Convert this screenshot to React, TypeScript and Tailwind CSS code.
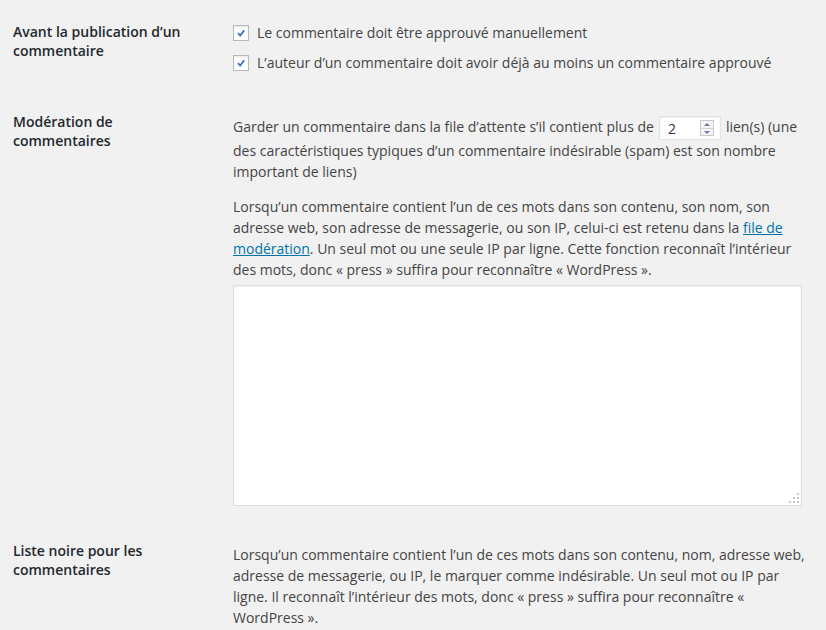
import React from "react";

const Check = ({ label }: { label: string }) => (
  <label className="flex items-center gap-[8px] leading-[21px]">
    <span className="relative inline-flex h-[16px] w-[16px] shrink-0 items-center justify-center border border-[#b4b9be] bg-white shadow-[inset_0_1px_2px_rgba(0,0,0,0.1)]">
      <svg width="10" height="10" viewBox="0 0 10 10">
        <path d="M2 5.2 L4.2 7.6 L8.2 2.2" fill="none" stroke="#3b6fc4" strokeWidth="1.8" />
      </svg>
    </span>
    <span>{label}</span>
  </label>
);

const NumberBox = ({ value }: { value: string }) => (
  <span className="mx-[5px] inline-flex h-[24px] w-[62px] items-center justify-between border border-[#e2e2e2] bg-white pl-[8px] pr-[6px] align-middle shadow-[inset_0_1px_2px_rgba(0,0,0,0.07)]">
    <span className="text-[#333]">{value}</span>
    <span className="flex h-[16px] w-[14px] flex-col border border-[#c9c9c9] bg-[#f4f4f4]">
      <span className="flex flex-1 items-center justify-center border-b border-[#d4d4d4]">
        <span className="h-0 w-0 border-x-[3px] border-b-[3px] border-x-transparent border-b-[#6b7f9a]" />
      </span>
      <span className="flex flex-1 items-center justify-center">
        <span className="h-0 w-0 border-x-[3px] border-t-[3px] border-x-transparent border-t-[#6b7f9a]" />
      </span>
    </span>
  </span>
);

const Row = ({
  label,
  children,
  className,
  bodyClass,
}: {
  label: string;
  children: React.ReactNode;
  className?: string;
  bodyClass?: string;
}) => (
  <div className={"flex " + (className ?? "")}>
    <div className="w-[220px] shrink-0 pr-[30px] text-[14px] font-semibold leading-[18.5px] text-[#23282d]">
      {label}
    </div>
    <div className={"w-[575px] " + (bodyClass ?? "")}>{children}</div>
  </div>
);

export default function App() {
  return (
    <div
      className="min-h-[630px] w-[826px] overflow-hidden bg-[#f1f1f1] pl-[13px] pt-[23px] text-[14px] text-[#444]"
      style={{ fontFamily: "'Open Sans', 'Noto Sans', sans-serif" }}
    >
      <Row label="Avant la publication d’un commentaire">
        <div className="-mt-[1px] flex flex-col gap-[9px]">
          <Check label="Le commentaire doit être approuvé manuellement" />
          <Check label="L’auteur d’un commentaire doit avoir déjà au moins un commentaire approuvé" />
        </div>
      </Row>

      <Row label="Modération de commentaires" className="mt-[40px]" bodyClass="pt-[3px]">
        <p className="leading-[21px]">
          Garder un commentaire dans la file d’attente s’il contient plus de
          <NumberBox value="2" />
          lien(s) (une des caractéristiques typiques d’un commentaire indésirable (spam) est son nombre
          important de liens)
        </p>
        <p className="mt-[14px] leading-[21px]">
          Lorsqu’un commentaire contient l’un de ces mots dans son contenu, son nom, son adresse web, son
          adresse de messagerie, ou son IP, celui-ci est retenu dans la{" "}
          <a href="#" className="text-[#0073aa] underline">
            file de modération
          </a>
          . Un seul mot ou une seule IP par ligne. Cette fonction reconnaît l’intérieur des mots, donc « press
          » suffira pour reconnaître « WordPress ».
        </p>
        <div className="relative mt-[5px] h-[221px] w-[569px]">
          <textarea className="block h-full w-full resize-none border border-[#ddd] bg-white shadow-[inset_0_1px_2px_rgba(0,0,0,0.07)] outline-none" />
          <svg className="pointer-events-none absolute bottom-[3px] right-[3px]" width="10" height="10" viewBox="0 0 10 10">
            <rect x="8" y="0" width="2" height="2" fill="#c6c6c6" />
            <rect x="4" y="4" width="2" height="2" fill="#c6c6c6" />
            <rect x="8" y="4" width="2" height="2" fill="#c6c6c6" />
            <rect x="0" y="8" width="2" height="2" fill="#c6c6c6" />
            <rect x="4" y="8" width="2" height="2" fill="#c6c6c6" />
            <rect x="8" y="8" width="2" height="2" fill="#c6c6c6" />
          </svg>
        </div>
      </Row>

      <Row label="Liste noire pour les commentaires" className="mt-[36px]" bodyClass="pt-[2px]">
        <p className="leading-[21px]">
          Lorsqu’un commentaire contient l’un de ces mots dans son contenu, nom, adresse web, adresse de
          messagerie, ou IP, le marquer comme indésirable. Un seul mot ou IP par ligne. Il reconnaît
          l’intérieur des mots, donc « press » suffira pour reconnaître « WordPress ».
        </p>
      </Row>
    </div>
  );
}
